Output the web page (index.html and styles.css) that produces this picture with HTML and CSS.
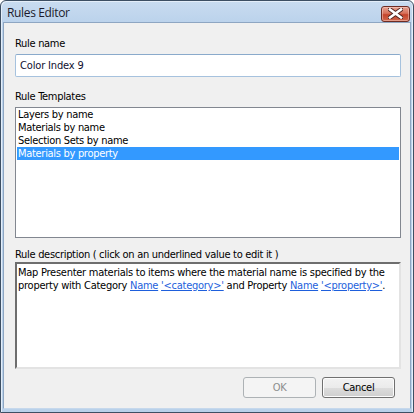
FILE: index.html
```html
<!DOCTYPE html>
<html>
<head>
<meta charset="utf-8">
<title>Rules Editor</title>
<link rel="stylesheet" href="styles.css">
</head>
<body>
<div class="window">
  <div class="titlebar">
    <span class="title">Rules Editor</span>
    <div class="close">
      <svg width="15" height="11" viewBox="0 0 15 11">
        <path d="M2 1.5 L13 9.5 M13 1.5 L2 9.5" stroke="#4e2420" stroke-width="4.4" stroke-linecap="square" fill="none"/>
        <path d="M2 1.5 L13 9.5 M13 1.5 L2 9.5" stroke="#ffffff" stroke-width="2.6" stroke-linecap="square" fill="none"/>
      </svg>
    </div>
  </div>
  <div class="client">
    <div class="label label-first">Rule name</div>
    <div class="textbox">Color Index 9</div>
    <div class="label label-templates">Rule Templates</div>
    <div class="listbox">
      <div class="item">Layers by name</div>
      <div class="item">Materials by name</div>
      <div class="item">Selection Sets by name</div>
      <div class="item selected">Materials by property</div>
    </div>
    <div class="label label-desc">Rule description ( click on an underlined value to edit it )</div>
    <div class="desc"><span class="run">Map Presenter materials to items where the material name is specified by the</span> <span class="run">property with Category</span> <span class="link">Name</span>&nbsp;<span class="link">'&lt;category&gt;'</span> <span class="run">and Property</span> <span class="link">Name</span>&nbsp;<span class="link">'&lt;property&gt;'</span><span class="run">.</span></div>
    <div class="buttons">
      <div class="btn btn-disabled">OK</div>
      <div class="btn">Cancel</div>
    </div>
  </div>
</div>
</body>
</html>
```
FILE: styles.css
```css
html, body {
  margin: 0;
  padding: 0;
  background: #ffffff;
}
body {
  width: 414px;
  height: 413px;
  overflow: hidden;
  font-family: "DejaVu Sans Condensed", "Liberation Sans", Arial, sans-serif;
  font-size: 11px;
  letter-spacing: -0.3px;
  color: #000000;
}
.window {
  box-sizing: border-box;
  width: 414px;
  height: 413px;
  border: 1px solid #3d4f63;
  border-radius: 6px 6px 0 0;
  background: linear-gradient(#c9dcf0, #bcd3ec 20px, #b9d1ea);
  padding: 0 2px 3px 2px;
  display: flex;
  flex-direction: column;
  box-shadow: inset 1px 1px 0 #e4eef9, inset -1px 0 0 #e4eef9;
}
.titlebar {
  height: 21px;
  flex: none;
  display: flex;
  align-items: center;
  justify-content: space-between;
  padding: 0 0 0 4px;
}
.title {
  font-family: "Open Sans", "Noto Sans", sans-serif;
  font-size: 12px;
  color: #1c1c2c;
  letter-spacing: -0.35px;
  margin-top: 1px;
}
.close {
  width: 27px;
  height: 14px;
  margin-top: 4px;
  margin-right: 1px;
  border: 1px solid #6d2c23;
  border-radius: 3px;
  background: linear-gradient(#e5a190, #d7715b 45%, #c4442c 55%, #d0684e);
  box-shadow: inset 0 0 0 1px rgba(255, 220, 210, 0.45);
  display: flex;
  align-items: center;
  justify-content: center;
}
.close svg {
  display: block;
}
.client {
  flex: 1;
  background: #f0f0f0;
  border: 1px solid #8ea6c2;
  border-bottom-color: #c6d8ec;
  margin-top: 0;
  padding: 14px 9px 0 11px;
  display: flex;
  flex-direction: column;
}
.label {
  height: 13px;
  line-height: 13px;
  white-space: nowrap;
}
.label-first {
  margin-top: 0;
}
.textbox {
  box-sizing: border-box;
  height: 23px;
  margin-top: 4px;
  border: 1px solid #a6c2de;
  border-top-color: #8aaacb;
  border-radius: 2px;
  background: #ffffff;
  padding: 0 0 0 4px;
  line-height: 21px;
  color: #101030;
  letter-spacing: -0.15px;
}
.label-templates {
  margin-top: 13px;
}
.listbox {
  box-sizing: border-box;
  height: 131px;
  margin-top: 4px;
  border: 1px solid #828790;
  background: #ffffff;
  padding: 0 1px;
}
.item {
  height: 13px;
  padding: 1px 0 0 1px;
  box-sizing: border-box;
  line-height: 12px;
  white-space: nowrap;
}
.item.selected {
  background: #3399ff;
  color: #ffffff;
}
.label-desc {
  margin-top: 10px;
}
.desc {
  box-sizing: border-box;
  height: 107px;
  margin-top: 1px;
  border: 2px solid;
  border-color: #6e6e6e #e3e3e3 #e3e3e3 #6e6e6e;
  background: #ffffff;
  padding: 2px 4px 0 1px;
  line-height: 13px;
  letter-spacing: -0.26px;
}
.link {
  color: #1e5fdc;
  text-decoration: underline;
}
.buttons {
  display: flex;
  justify-content: flex-end;
  gap: 6px;
  margin-top: 8px;
  margin-right: 6px;
}
.btn {
  box-sizing: border-box;
  width: 73px;
  height: 21px;
  border: 1px solid #707070;
  border-radius: 3px;
  background: linear-gradient(#f2f2f2, #ebebeb 50%, #dddddd 51%, #cfcfcf);
  box-shadow: inset 0 0 0 1px #fcfcfc;
  display: flex;
  align-items: center;
  justify-content: center;
  line-height: 13px;
}
.btn-disabled {
  border-color: #adb2b5;
  background: #f4f4f4;
  color: #8d8d8d;
  box-shadow: none;
}
```
